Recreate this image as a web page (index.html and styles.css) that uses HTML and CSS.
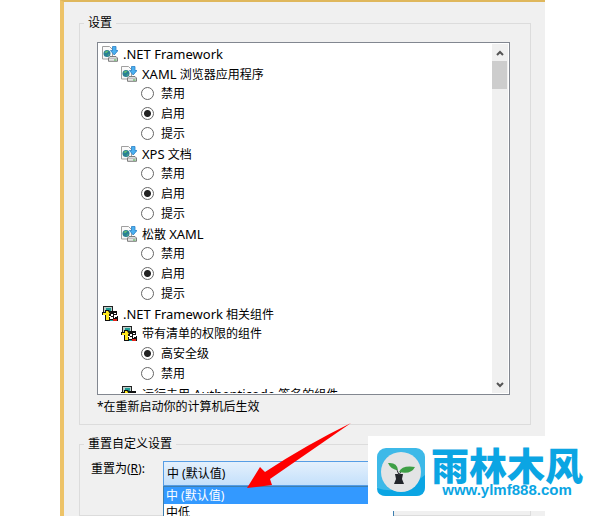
FILE: index.html
```html
<!DOCTYPE html>
<html lang="zh-CN">
<head>
    <meta charset="UTF-8">
    <meta name="viewport" content="width=device-width, initial-scale=1.0">
    <title>安全设置</title>
    <link rel="stylesheet" href="styles.css">
</head>
<body>
    <!-- Shared icons -->
    <svg class="symbols" aria-hidden="true">
        <symbol id="icon-download" viewBox="0 0 16 16">
            <path d="M.5.500h7l3 3v9.500H.5z" fill="#fafafa" stroke="#a0a0a0"/>
            <circle cx="5" cy="7.500" r="3.500" fill="#2a7f95"/>
            <path d="M2.500 6.500q1.500-2.500 4-1.500l-2 2zM5 10l2-2 .5 1z" fill="#63c06c"/>
            <path d="M10.500.5h3.500v4h2L12.200 9 8.500 4.500h2z" fill="#4bb0f0" stroke="#2d80c4" stroke-width=".8"/>
            <path d="M8 10.500h6L15.500 12v3.300H6.500V12z" fill="#e4e4e4" stroke="#707070" stroke-width=".9"/>
            <path d="M7 12.300h8" stroke="#999" stroke-width=".6"/>
            <path d="M12 14h2.500" stroke="#43b54a"/>
        </symbol>
        <symbol id="icon-component" viewBox="0 0 16 16">
            <path d="M1 0h10v8H1z" fill="#222"/>
            <path d="M2 1h8v6H2z" fill="#bcd0cc"/>
            <path d="M4 2h5v4H4z" fill="#1d9a94"/>
            <path d="M0 6h3V4h4l2 3v3H7v5H3V9H0z" fill="#111"/>
            <path d="M1 7h3V5h2l2 3H7v6H4V9H1z" fill="#ffe81c"/>
            <path d="M8 5h7v5h1v5H7v-4h2z" fill="#111"/>
            <path d="M9 8h2v2H9zM12 7h2v1h-2zM12 9h3v2h-2v1h-1zM8 11h3v2H8z" fill="#fff"/>
            <path d="M8 14h3v1H8z" fill="#19a7a7"/>
            <path d="M11 13h4v2h-4z" fill="#e2231a"/>
        </symbol>
    </svg>

    <main class="dialog">
        <fieldset class="group">
            <legend>设置</legend>
            <div class="tree">
                <div class="tree-items">
                    <div class="row"><svg class="icon"><use href="#icon-download"/></svg><span class="latin">.NET Framework</span></div>

                    <div class="row level-2"><svg class="icon"><use href="#icon-download"/></svg><span><span class="latin">XAML</span> 浏览器应用程序</span></div>
                    <label class="row level-3"><input type="radio" name="xaml-browser">禁用</label>
                    <label class="row level-3"><input type="radio" name="xaml-browser" checked>启用</label>
                    <label class="row level-3"><input type="radio" name="xaml-browser">提示</label>

                    <div class="row level-2"><svg class="icon"><use href="#icon-download"/></svg><span><span class="latin">XPS</span> 文档</span></div>
                    <label class="row level-3"><input type="radio" name="xps">禁用</label>
                    <label class="row level-3"><input type="radio" name="xps" checked>启用</label>
                    <label class="row level-3"><input type="radio" name="xps">提示</label>

                    <div class="row level-2"><svg class="icon"><use href="#icon-download"/></svg><span>松散 <span class="latin">XAML</span></span></div>
                    <label class="row level-3"><input type="radio" name="xaml-loose">禁用</label>
                    <label class="row level-3"><input type="radio" name="xaml-loose" checked>启用</label>
                    <label class="row level-3"><input type="radio" name="xaml-loose">提示</label>

                    <div class="row"><svg class="icon"><use href="#icon-component"/></svg><span><span class="latin">.NET Framework</span> 相关组件</span></div>

                    <div class="row level-2"><svg class="icon"><use href="#icon-component"/></svg><span>带有清单的权限的组件</span></div>
                    <label class="row level-3"><input type="radio" name="manifest" checked>高安全级</label>
                    <label class="row level-3"><input type="radio" name="manifest">禁用</label>

                    <div class="row level-2"><svg class="icon"><use href="#icon-component"/></svg><span>运行未用 <span class="latin">Authenticode</span> 签名的组件</span></div>
                </div>
                <div class="scrollbar">
                    <button class="scroll-button" type="button" aria-label="向上滚动"><svg viewBox="0 0 8 6"><path d="M1 5l3-3 3 3"/></svg></button>
                    <div class="thumb"></div>
                    <button class="scroll-button" type="button" aria-label="向下滚动"><svg viewBox="0 0 8 6"><path d="M1 1l3 3 3-3"/></svg></button>
                </div>
            </div>
            <p class="note">*在重新启动你的计算机后生效</p>
        </fieldset>

        <fieldset class="group">
            <legend>重置自定义设置</legend>
            <div class="reset">
                <label for="level">重置为(<u>R</u>):</label>
                <div class="dropdown">
                    <select id="level">
                        <option>中 (默认值)</option>
                        <option>中低</option>
                    </select>
                    <ul class="options">
                        <li class="selected">中 (默认值)</li>
                        <li>中低</li>
                    </ul>
                </div>
            </div>
        </fieldset>
    </main>

    <svg class="arrow" viewBox="0 0 106 68" aria-hidden="true">
        <path d="M105 1Q60 23 19 50l-5-5L1 66l25-3-2-6Q66 28 105 1z" fill="#fe0000"/>
    </svg>

    <a class="watermark" href="#">
        <svg class="logo" viewBox="0 0 48 48" aria-hidden="true">
            <rect width="48" height="48" rx="9" fill="#3db9e8"/>
            <path d="M0 40Q24 48 48 27v12q0 9-9 9H9q-9 0-9-8z" fill="#0ba5e3"/>
            <circle cx="24" cy="24" r="20" fill="#e3e4e5"/>
            <path d="M18 26h3l1 1 1-1h3l-1 5 2 5H17l2-5z" fill="#22252a"/>
            <path d="M22 27q-1-5-5-8M22 27q1-3 4-5" fill="none" stroke="#22252a"/>
            <path d="M11 15q9-1 10 7-7 0-10-7zM22 24q3-7 16-5-4 8-16 5z" fill="#3d9f45"/>
        </svg>
        <span class="brand">
            <span class="brand-name">雨林木风</span>
            <span class="brand-url">www.ylmf888.com</span>
        </span>
    </a>
</body>
</html>
```
FILE: styles.css
```css
* { box-sizing: border-box; }
body {
    margin: 0;
    height: 100vh;
    overflow: hidden;
    background: #fff;
    color: #000;
    font: 12px/20px "Noto Sans", "Noto Sans CJK SC", sans-serif;
}
.symbols { display: none; }
.latin { font-size: 13px; }
.dialog {
    height: 100vh;
    margin: 0 51px 0 60px;
    padding: 13px 14px 0 15px;
    background: #f0f0f0;
    border-top: 2px solid #dfb75c;
    border-left: 4px solid #edc368;
}
.group {
    min-width: 0;
    margin: 0 0 11px;
    padding: 0 4px 7px;
    border: 1px solid #dcdcdc;
}
.group legend {
    padding: 0 4px;
    line-height: 16px;
}
.tree {
    display: flex;
    height: 353px;
    margin: 11px 16px 0 13px;
    padding: 1px;
    border: 1px solid #828790;
    background: #fff;
}
.tree-items {
    flex: 1;
    overflow: hidden;
    padding-left: 3px;
}
.row {
    display: flex;
    align-items: center;
    gap: 5px;
    height: 20px;
    line-height: 18px;
    white-space: pre;
}
.level-2 { padding-left: 19px; }
.level-3 {
    gap: 7px;
    padding-left: 39px;
}
.icon {
    width: 16px;
    height: 16px;
}
.row input {
    appearance: none;
    width: 13px;
    height: 13px;
    margin: 0 0 1px;
    border: 1px solid #666;
    border-radius: 50%;
    background: #fff;
}
.row input:checked {
    background: radial-gradient(circle, #222 3px, #fff 4px);
}
.scrollbar {
    display: flex;
    flex-direction: column;
    width: 16px;
    background: #f0f0f0;
}
.scroll-button {
    height: 17px;
    padding: 0;
    border: none;
    background: none;
    line-height: 0;
}
.scroll-button:last-child { margin-top: auto; }
.scroll-button svg {
    width: 8px;
    height: 6px;
    fill: none;
    stroke: #555;
    stroke-width: 2;
}
.thumb {
    height: 28px;
    margin-right: 1px;
    background: #cdcdcd;
}
.note {
    margin: 2px 13px 0;
}
.reset {
    display: flex;
    height: 47px;
    margin: 9px 7px 0;
    line-height: 16px;
}
.reset label { width: 72px; }
.dropdown {
    position: relative;
    width: 231px;
}
.dropdown select {
    appearance: none;
    display: block;
    width: 100%;
    height: 25px;
    padding: 0 3px;
    border: 1px solid #569de5;
    border-radius: 0;
    background: linear-gradient(#e4f0fc, #c4e0fb);
    color: #000;
    font: inherit;
}
.options {
    position: absolute;
    top: 25px;
    left: 0;
    width: 100%;
    margin: 0;
    padding: 0;
    border: 1px solid #3c7fb1;
    background: #fff;
    list-style: none;
}
.options li {
    height: 17px;
    padding: 0 2px;
    line-height: 17px;
}
.options .selected {
    background: #3399ff;
    color: #fff;
}
.arrow {
    position: absolute;
    top: 422px;
    left: 246px;
    width: 106px;
    height: 68px;
}
.watermark {
    position: absolute;
    top: 436px;
    right: 0;
    display: flex;
    gap: 6px;
    width: 228px;
    height: 75px;
    padding: 12px 9px;
    background: #fff;
    color: #0ba5e3;
    text-decoration: none;
}
.logo {
    width: 48px;
    height: 48px;
}
.brand {
    display: flex;
    flex-direction: column;
    align-items: center;
}
.brand-name {
    font: 900 38px/32px "Noto Sans CJK SC", sans-serif;
}
.brand-url {
    margin-top: 2px;
    font: bold 15px/16px "Liberation Sans", sans-serif;
}
```
